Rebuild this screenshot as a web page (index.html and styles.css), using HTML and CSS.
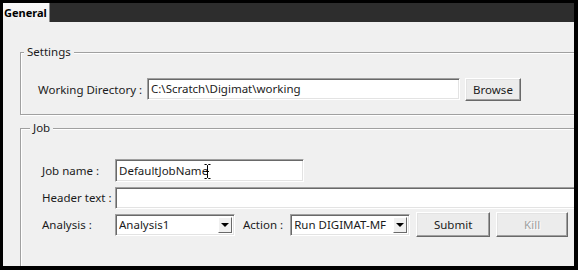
FILE: index.html
```html
<!DOCTYPE html>
<html lang="en">
<head>
    <meta charset="UTF-8">
    <title>General</title>
    <link rel="stylesheet" href="styles.css">
</head>
<body>
    <div class="window">
        <div class="tab-bar">
            <div class="tab active">General</div>
        </div>

        <div class="page">
            <fieldset class="group">
                <legend>Settings</legend>
                <div class="row">
                    <span class="label wide">Working Directory :</span>
                    <div class="field dir">C:\Scratch\Digimat\working</div>
                    <button class="btn browse">Browse</button>
                </div>
            </fieldset>

            <fieldset class="group job">
                <legend>Job</legend>
                <div class="row">
                    <span class="label">Job name :</span>
                    <div class="field name">DefaultJobName
                        <svg class="ibeam" width="7" height="15" viewBox="0 0 7 15">
                            <path d="M0.5 0.5h2l1 1l1-1h2M3.5 1.5v12M0.5 14.5h2l1-1l1 1h2M2 7.5h3" fill="none" stroke="#000" stroke-width="1"/>
                        </svg>
                    </div>
                </div>
                <div class="row">
                    <span class="label">Header text :</span>
                    <div class="field header"></div>
                </div>
                <div class="row">
                    <span class="label">Analysis :</span>
                    <div class="combo">
                        <span class="combo-text">Analysis1</span>
                        <span class="combo-arrow"></span>
                    </div>
                    <span class="label action">Action :</span>
                    <div class="combo">
                        <span class="combo-text">Run DIGIMAT-MF</span>
                        <span class="combo-arrow"></span>
                    </div>
                    <button class="btn submit">Submit</button>
                    <button class="btn kill" disabled>Kill</button>
                </div>
            </fieldset>
        </div>
    </div>
</body>
</html>
```

FILE: styles.css
```css
html, body {
    margin: 0;
    padding: 0;
    background: #000;
}
body {
    width: 578px;
    height: 270px;
    padding: 3px 4px 4px 3px;
    box-sizing: border-box;
    font-family: "Noto Sans", "Liberation Sans", sans-serif;
    font-size: 11.5px;
    color: #1b1b1b;
}
.window {
    height: 263px;
    background: #f0f0f0;
    overflow: hidden;
}
.tab-bar {
    display: flex;
    height: 19px;
    background: #2d2d2d;
}
.tab {
    padding: 0 2px 0 1px;
    line-height: 19px;
    font-size: 11px;
    font-weight: bold;
    color: #000;
    background: linear-gradient(#f8f8f8, #f0f0f0);
    border-right: 1px solid #8c8c8c;
}
.page {
    padding: 22px 0 0 17px;
}
.group {
    margin: 0 -40px 0 0;
    padding: 18px 0 14px 17px;
    border: 1px solid #a0a0a0;
    box-shadow: 1px 1px 0 #fff, inset 1px 1px 0 #fff;
}
.group legend {
    margin-left: -14px;
    padding: 0 3px;
    line-height: 16px;
    background: #f0f0f0;
}
.group.job {
    margin-top: 5px;
    padding: 21px 0 30px 21px;
}
.group.job legend {
    margin-left: -12px;
}
.row {
    display: flex;
    align-items: center;
    height: 27px;
}
.group:first-of-type .row {
    height: 22px;
}
.label {
    width: 73px;
    flex: none;
}
.label.wide {
    width: 109px;
}
.label.action {
    width: auto;
    margin: 0 7px 0 8px;
}
.field {
    position: relative;
    height: 22px;
    box-sizing: border-box;
    padding: 0 3px;
    line-height: 20px;
    background: #fff;
    border: 1px solid;
    border-color: #a0a0a0 #fff #fff #a0a0a0;
    box-shadow: inset 1px 1px 0 #696969, inset -1px -1px 0 #e3e3e3;
    color: #1b1b1b;
    white-space: nowrap;
}
.field.dir {
    width: 313px;
}
.field.name {
    width: 189px;
    height: 23px;
    line-height: 21px;
}
.field.header {
    width: 480px;
}
.ibeam {
    position: absolute;
    left: 88px;
    top: 4px;
}
.combo {
    display: flex;
    align-items: center;
    width: 120px;
    height: 22px;
    box-sizing: border-box;
    padding: 2px 2px 2px 3px;
    background: #fff;
    border: 1px solid;
    border-color: #a0a0a0 #fff #fff #a0a0a0;
    box-shadow: inset 1px 1px 0 #696969, inset -1px -1px 0 #e3e3e3;
}
.combo-text {
    flex: 1;
    line-height: 18px;
    white-space: nowrap;
    overflow: hidden;
}
.combo-arrow {
    position: relative;
    width: 14px;
    height: 16px;
    flex: none;
    background: #f0f0f0;
    border: 1px solid;
    border-color: #fff #696969 #696969 #fff;
    box-sizing: border-box;
}
.combo-arrow::after {
    content: "";
    position: absolute;
    left: 2px;
    top: 5px;
    border-left: 4px solid transparent;
    border-right: 4px solid transparent;
    border-top: 4px solid #000;
}
.btn {
    height: 23px;
    margin-left: 5px;
    padding: 0;
    font-family: inherit;
    font-size: 11.5px;
    color: #1b1b1b;
    background: #ececec;
    border: 1px solid;
    border-color: #fff #696969 #696969 #fff;
    box-shadow: inset -1px -1px 0 #a0a0a0, inset 1px 1px 0 #e3e3e3;
}
.btn.browse {
    width: 56px;
}
.btn.submit {
    width: 74px;
    height: 25px;
    margin-left: 6px;
}
.btn.kill {
    width: 72px;
    height: 25px;
    margin-left: 6px;
    color: #a0a0a0;
    text-shadow: 1px 1px 0 #fff;
}
```
